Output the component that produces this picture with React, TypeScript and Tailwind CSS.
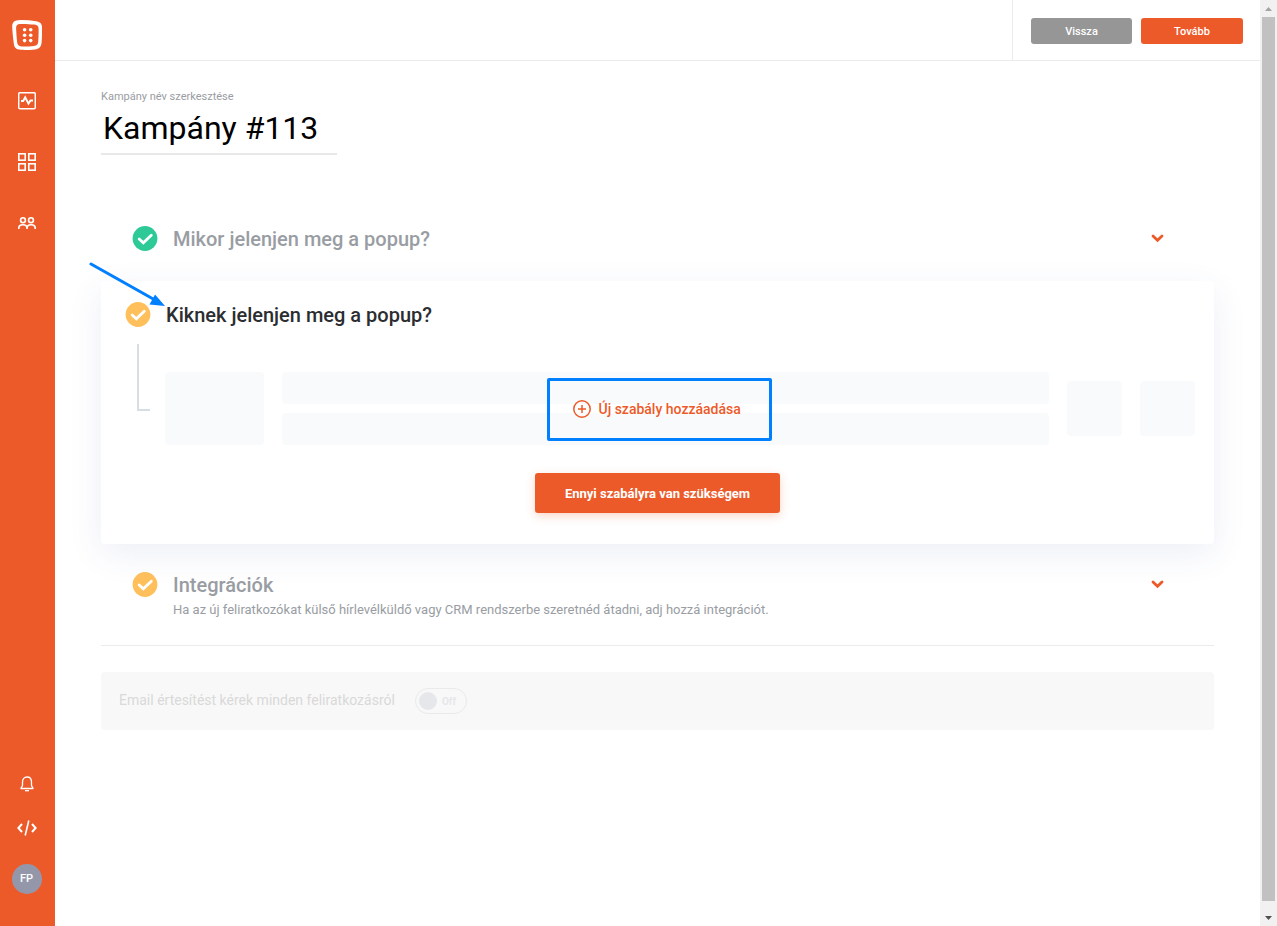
import { useState } from "react";
import type { ReactNode } from "react";

function Logo() {
  return (
    <svg width="30" height="30" viewBox="0 0 30 30" fill="none">
      <path
        fill="#fff"
        fillRule="evenodd"
        d="M6 .2C12 -.1 18 .4 24 1.200C28 1.800 30 3.600 30 7.200C30.100 12 30 18 29.600 22.500C29.200 27 27 29 23 29.400C18 29.900 13 30.100 8.500 29.800C4 29.500 2.300 27.500 1.800 23.500C1 18 .5 12 .2 7C0 3 2 .4 6 .2ZM8 4C5.200 4.200 4 5.400 4.100 8C4.300 13 4.600 17.500 5.100 22C5.400 25 6.800 26.300 9.500 26.400C13.500 26.500 18 26.300 22 25.900C24.800 25.600 26 24.500 26.200 22C26.500 17.500 26.700 12.500 26.600 8.800C26.500 6 25.300 4.900 22.500 4.600C18 4.100 12 3.800 8 4Z"
      />
      {[9.8, 15.2, 20.6].map((cy) => (
        <g key={cy} fill="#fff">
          <circle cx="12.600" cy={cy} r="1.800" />
          <circle cx="18.700" cy={cy} r="1.800" />
        </g>
      ))}
    </svg>
  );
}

function ActivityIcon() {
  return (
    <svg width="18" height="18" viewBox="0 0 18 18" fill="none" stroke="#fff" strokeWidth="1.500">
      <rect x=".7" y=".7" width="16.600" height="16" rx="1.300" />
      <path strokeWidth="1.900" d="M3 9H5.200L7.200 5.300L10.500 11.600L12.500 8.500H15" />
    </svg>
  );
}

function GridIcon() {
  return (
    <svg width="18" height="18" viewBox="0 0 18 18" fill="none" stroke="#fff" strokeWidth="1.600">
      <rect x=".8" y=".8" width="6.400" height="6.400" />
      <rect x="10.800" y=".8" width="6.400" height="6.400" />
      <rect x=".8" y="10.800" width="6.400" height="6.400" />
      <rect x="10.800" y="10.800" width="6.400" height="6.400" />
    </svg>
  );
}

function PeopleIcon() {
  return (
    <svg width="18" height="12" viewBox="0 0 18 12" fill="none" stroke="#fff" strokeWidth="1.600">
      <circle cx="5" cy="3.200" r="2.400" />
      <circle cx="13" cy="3.200" r="2.400" />
      <path d="M.8 12V11C.8 8.900 2.500 7.700 4.900 7.700S9 8.900 9 11V12M9 11C9 8.900 10.700 7.700 13.100 7.700S17.200 8.900 17.200 11V12" />
    </svg>
  );
}

function BellIcon() {
  return (
    <svg width="14" height="16" viewBox="0 0 14 16" fill="none" stroke="#fff" strokeWidth="1.300" strokeLinejoin="round">
      <path d="M2.500 6C2.500 3 4.300 1 7 1S11.500 3 11.500 6V9.300C11.500 10.500 13 11.200 13 12.500H1C1 11.200 2.500 10.500 2.500 9.300Z" />
      <path d="M5 14.700H9" />
    </svg>
  );
}

function CodeIcon() {
  return (
    <svg width="20" height="16" viewBox="0 0 20 16" fill="none" stroke="#fff">
      <path strokeWidth="2" d="M5 4L1.400 8L5 12M15 4L18.600 8L15 12" />
      <path strokeWidth="1.600" d="M11.800 .5L8.200 15.500" />
    </svg>
  );
}

function CheckBadge({ color }: { color: string }) {
  return (
    <svg width="25" height="25" viewBox="0 0 25 25" fill="none" className="shrink-0 overflow-visible">
      <circle cx="12" cy="12.500" r="12.400" fill={color} />
      <path d="M6.200 13L10.300 16.800L18.300 9.200" stroke="#fff" strokeWidth="2.800" strokeLinecap="round" />
    </svg>
  );
}

function Chevron() {
  return (
    <svg width="13" height="9" viewBox="0 0 13 9" fill="none">
      <path d="M2 2L6.500 6.300L11 2" stroke="#ed5a29" strokeWidth="2.800" strokeLinecap="round" />
    </svg>
  );
}

const navItems = [
  { label: "Statisztika", icon: ActivityIcon },
  { label: "Kampányok", icon: GridIcon },
  { label: "Feliratkozók", icon: PeopleIcon },
];

function Sidebar() {
  return (
    <aside className="flex w-[55px] shrink-0 flex-col items-center bg-[#ed5a29] pt-5 pr-0.5 pb-8">
      <a href="#" aria-label="Kezdőlap">
        <Logo />
      </a>
      <nav className="mt-5 flex flex-col items-center">
        {navItems.map((item) => {
          const Icon = item.icon;
          return (
            <a
              key={item.label}
              href="#"
              aria-label={item.label}
              className="flex h-[61px] w-10 items-center justify-center"
            >
              <Icon />
            </a>
          );
        })}
      </nav>
      <div className="mt-auto flex flex-col items-center">
        <button aria-label="Értesítések" className="flex h-11 w-10 items-center justify-center">
          <BellIcon />
        </button>
        <button aria-label="Kód" className="flex h-11 w-10 items-center justify-center">
          <CodeIcon />
        </button>
        <button className="mt-3.5 h-[30px] w-[30px] rounded-full bg-[#9497aa] text-[11px] font-medium text-white">
          FP
        </button>
      </div>
    </aside>
  );
}

function Header() {
  return (
    <header className="flex h-[61px] justify-end border-b border-[#ebebeb]">
      <div className="flex items-center gap-[9px] border-l border-[#ebebeb] pt-0.5 pr-[17px] pl-[18px]">
        <button className="h-[26px] w-[101px] rounded-[3px] bg-[#969696] pt-0.5 text-[11px] font-medium text-white">
          Vissza
        </button>
        <button className="h-[26px] w-[102px] rounded-[3px] bg-[#ed5a29] pt-0.5 text-[11px] font-medium text-white">
          Tovább
        </button>
      </div>
    </header>
  );
}

function CollapsedSection({ title, color, children }: { title: string; color: string; children?: ReactNode }) {
  return (
    <section className="pr-[50px] pl-8">
      <h2>
        <button className="flex w-full items-center text-left text-xl leading-6 font-medium text-[#999da3]">
          <CheckBadge color={color} />
          <span className="ml-[15px] flex-1">{title}</span>
          <Chevron />
        </button>
      </h2>
      {children}
    </section>
  );
}

function RulesCard() {
  return (
    <section className="relative mt-[30px] rounded bg-white pt-[21px] pb-[31px] shadow-[0_10px_35px_rgba(60,80,150,0.09)]">
      <h2 className="flex items-center pl-[25px] text-xl leading-6 font-medium text-[#2b2d30]">
        <CheckBadge color="#ffc05c" />
        <span className="ml-[15px]">Kiknek jelenjen meg a popup?</span>
      </h2>

      {/* Pointer to the heading */}
      <svg className="pointer-events-none absolute -top-5 -left-3" width="80" height="48" viewBox="0 0 80 48" fill="none">
        <path d="M2 3L66 39" stroke="#007fff" strokeWidth="3" strokeLinecap="round" />
        <path d="M76 45L60.500 43.500L66 33.500Z" fill="#007fff" />
      </svg>

      <div className="mt-[17px] flex pr-[19px] pl-9">
        <div className="h-[67px] w-[13px] border-b-2 border-l-2 border-[#d8dde2]" />
        <div className="relative mt-7 ml-[15px] flex flex-1 items-center gap-[18px]">
          <div className="h-[73px] w-[99px] rounded bg-[#f9fafc]" />
          <div className="flex flex-1 flex-col gap-[9px]">
            <div className="h-8 rounded bg-[#f9fafc]" />
            <div className="h-8 rounded bg-[#f9fafc]" />
          </div>
          <div className="h-[55px] w-[55px] rounded bg-[#f9fafc]" />
          <div className="h-[55px] w-[55px] rounded bg-[#f9fafc]" />

          <div className="absolute top-0.5 right-16 bottom-0 left-[22px] flex items-center justify-center">
            <button className="flex h-[63px] w-[225px] items-center rounded-[2px] border-[3px] border-[#007fff] pb-0.5 pl-[23px] text-sm font-medium text-[#ed5a29]">
              <svg width="18" height="18" viewBox="0 0 18 18" fill="none" stroke="currentColor" strokeWidth="1.500">
                <circle cx="9" cy="9" r="8.200" />
                <path d="M5 9H13M9 5V13" />
              </svg>
              <span className="ml-2">Új szabály hozzáadása</span>
            </button>
          </div>
        </div>
      </div>

      <div className="mt-7 flex justify-center">
        <button className="h-10 w-[245px] rounded-[3px] bg-[#ed5a29] pt-px text-[13px] font-bold text-white shadow-[0_3px_10px_rgba(237,90,41,0.25)]">
          Ennyi szabályra van szükségem
        </button>
      </div>
    </section>
  );
}

function EmailNotice() {
  const [on, setOn] = useState(false);

  return (
    <div className="mt-[26px] flex h-[58px] items-center rounded bg-[#f8f8f8] pl-[18px]">
      <label htmlFor="email-notice" className="pb-0.5 text-sm text-[#d9d9d9]">
        Email értesítést kérek minden feliratkozásról
      </label>
      <span className="relative ml-5 flex h-[26px] w-[52px] items-center rounded-full border border-[#e9eaec] pl-[3px]">
        <input
          id="email-notice"
          type="checkbox"
          role="switch"
          checked={on}
          onChange={(e) => setOn(e.target.checked)}
          className="absolute inset-0 appearance-none rounded-full"
        />
        <span className="h-[18px] w-[18px] rounded-full bg-[#e6e7eb]" />
        <span className="ml-[5px] text-[10px] font-bold text-[#e6e7eb]">{on ? "On" : "Off"}</span>
      </span>
    </div>
  );
}

function ScrollTrack() {
  return (
    <div className="flex w-[17px] shrink-0 flex-col items-center justify-between bg-[#f1f1f1]" aria-hidden="true">
      <svg width="17" height="17" viewBox="0 0 17 17">
        <path d="M5 11L8.500 7L12 11Z" fill="#a3a3a3" />
      </svg>
      <div className="mb-2 w-[13px] flex-1 bg-[#c1c1c1]" />
      <svg width="17" height="17" viewBox="0 0 17 17">
        <path d="M5 7L8.500 11L12 7Z" fill="#505050" />
      </svg>
    </div>
  );
}

export default function App() {
  return (
    <div className="flex min-h-screen bg-white font-['Roboto',sans-serif]">
      <Sidebar />
      <div className="min-w-0 flex-1">
        <Header />
        <main className="px-[46px] pt-7">
          <label htmlFor="campaign-name" className="block text-[11px] leading-4 text-[#999da3]">
            Kampány név szerkesztése
          </label>
          <input
            id="campaign-name"
            defaultValue="Kampány #113"
            className="block h-[50px] w-[236px] border-b-2 border-[#e8e8e8] pb-0.5 pl-0.5 text-[32px] text-black outline-none"
          />

          <div className="mt-[71px]">
            <CollapsedSection title="Mikor jelenjen meg a popup?" color="#2dca97" />
          </div>
          <RulesCard />
          <div className="mt-7 border-b border-[#ebebeb] pb-[25px]">
            <CollapsedSection title="Integrációk" color="#ffc05c">
              <p className="ml-10 pt-[3px] text-[13px] leading-5 text-[#999da3]">
                Ha az új feliratkozókat külső hírlevélküldő vagy CRM rendszerbe szeretnéd átadni, adj hozzá integrációt.
              </p>
            </CollapsedSection>
          </div>
          <EmailNotice />
        </main>
      </div>
      <ScrollTrack />
    </div>
  );
}
